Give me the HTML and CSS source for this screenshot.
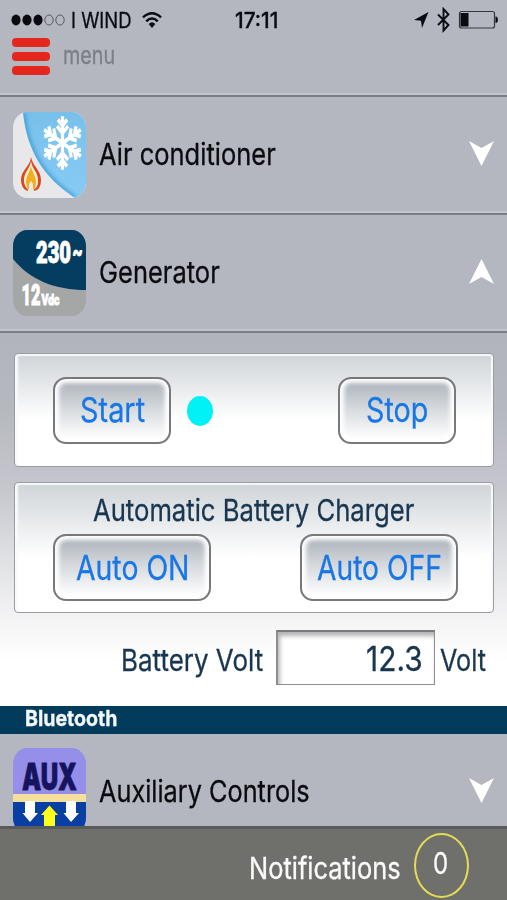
FILE: index.html
```html
<!DOCTYPE html>
<html lang="en">
<head>
<meta charset="utf-8">
<title>Controls</title>
<link rel="stylesheet" href="styles.css">
</head>
<body>
<div class="app">
  <header class="header">
    <div class="status">
      <svg class="signal" width="54" height="20" viewBox="0 0 54 20">
        <g fill="#090b10"><ellipse cx="5" cy="10" rx="4.6" ry="5.4"/><ellipse cx="16" cy="10" rx="4.6" ry="5.4"/><ellipse cx="27" cy="10" rx="4.6" ry="5.4"/></g>
        <g fill="none" stroke="#555960"><ellipse cx="38" cy="10" rx="4.2" ry="5"/><ellipse cx="49" cy="10" rx="4.2" ry="5"/></g>
      </svg>
      <span class="carrier"><span class="t">I WIND</span></span>
      <svg class="wifi" width="20" height="18" viewBox="0 0 20 18">
        <g fill="none" stroke="#090b10" stroke-width="2.4"><path d="M1 6.300Q10-2 19 6.300"/><path d="M4.200 10.300Q10 4.600 15.800 10.300"/></g>
        <path d="M6.700 13Q10 9.700 13.300 13L10 17z" fill="#090b10"/>
      </svg>
      <span class="clock"><span class="t">17:11</span></span>
      <svg class="tray" width="86" height="26" viewBox="0 0 86 26">
        <path d="M1 13 15.500 5 9 21 8 13.700z" fill="#090b10"/>
        <path d="M25 7.500 35.500 18 30.500 23.500V2L35.500 7.500 25 18" fill="none" stroke="#090b10" stroke-width="1.900"/>
        <rect x="46.500" y="4.500" width="35" height="16.500" rx="2" fill="none" stroke="#33363c" stroke-width="1.200"/>
        <rect x="47.500" y="6" width="8" height="13.500" fill="#090b10"/>
        <path d="M82.500 9.500h.8q1.700 1 1.700 3.300t-1.700 3.300h-.8z" fill="#090b10"/>
      </svg>
    </div>
    <div class="menu">
      <div class="burger"><i></i><i></i><i></i></div>
      <span class="menu-label"><span class="t">menu</span></span>
    </div>
  </header>

  <section class="row">
    <svg class="icon" width="73" height="86" viewBox="0 0 73 86">
      <defs>
        <clipPath id="tile"><rect width="73" height="86" rx="14" ry="16"/></clipPath>
        <linearGradient id="sky" x1="0" y1="0" x2="0" y2="1"><stop offset="0" stop-color="#78c0ea"/><stop offset="1" stop-color="#87cbf5"/></linearGradient>
        <filter id="soft"><feGaussianBlur stdDeviation="2"/></filter>
        <clipPath id="blue"><path d="M10 0C14 38 29 64 62 86H73V0z"/></clipPath>
      </defs>
      <g clip-path="url(#tile)">
        <rect width="73" height="86" fill="#e8e8ea"/>
        <path d="M10 0C14 38 29 64 62 86H73V0z" fill="url(#sky)"/>
        <g clip-path="url(#blue)"><path d="M10 0C14 38 29 64 62 86" fill="none" stroke="#3a9bd4" stroke-width="4" filter="url(#soft)"/></g>
        <g stroke="#fff" stroke-width="3.500" fill="none" transform="translate(49.500 31) scale(.92 1.160)">
          <g id="arm"><path d="M0 0V-23M-5-20 0-15 5-20M-6-14.500 0-8.500 6-14.500"/></g>
          <use href="#arm" transform="rotate(60)"/><use href="#arm" transform="rotate(120)"/><use href="#arm" transform="rotate(180)"/><use href="#arm" transform="rotate(240)"/><use href="#arm" transform="rotate(300)"/>
        </g>
        <path d="M18 45C17 55 8 58 8 68 8 74 11 78 15 79L14 72 18 66 22 72 21 79C26 78 28 74 28 68 28 58 20 55 18 45z" fill="#d94a24"/>
        <path d="M18 49C17 57 11 60 11 68 11 73 13 76 15 77L15 71 18 66 21 71 21 77C24 76 25 73 25 68 25 60 19 57 18 49z" fill="#fff1d0"/>
        <path d="M18 54C17 60 13 64 13 70 13 74 15 77 16 78V72L18 69 20 72V78C22 77 23 74 23 70 23 64 19 60 18 54z" fill="#f3ad22"/>
      </g>
    </svg>
    <span class="label l-air"><span class="t">Air conditioner</span></span>
    <svg class="arrow" width="25" height="25" viewBox="0 0 25 25"><path d="M0 0 12.500 7 25 0 12.500 25z" fill="#fff"/></svg>
  </section>

  <section class="row">
    <svg class="icon" width="73" height="86" viewBox="0 0 73 86">
      <g clip-path="url(#tile)">
        <rect width="73" height="86" fill="#a5a6a6"/>
        <path d="M0 0H73V60C42 60 17 50 0 29z" fill="#043d60"/>
      </g>
      <g class="plate">
        <text x="23" y="33" font-size="31" textLength="35" lengthAdjust="spacingAndGlyphs">230</text>
        <text x="59.500" y="31" font-size="25" textLength="10" lengthAdjust="spacingAndGlyphs">~</text>
        <text x="8.500" y="75" font-size="30" textLength="19" lengthAdjust="spacingAndGlyphs">12</text>
        <text x="28.500" y="75" font-size="15.500" textLength="18" lengthAdjust="spacingAndGlyphs">Vdc</text>
      </g>
    </svg>
    <span class="label l-gen"><span class="t">Generator</span></span>
    <svg class="arrow" width="25" height="25" viewBox="0 0 25 25"><path d="M0 25 12.500 18 25 25 12.500 0z" fill="#fff"/></svg>
  </section>

  <main class="content">
    <div class="panel power">
      <button class="btn start"><span class="t">Start</span></button>
      <span class="led"></span>
      <button class="btn stop"><span class="t">Stop</span></button>
    </div>
    <div class="panel charger">
      <h2 class="title"><span class="t">Automatic Battery Charger</span></h2>
      <div class="pair">
        <button class="btn on"><span class="t">Auto ON</span></button>
        <button class="btn off"><span class="t">Auto OFF</span></button>
      </div>
    </div>
    <div class="reading">
      <span class="name"><span class="t">Battery Volt</span></span>
      <span class="field"><span class="t">12.3</span></span>
      <span class="unit"><span class="t">Volt</span></span>
    </div>
  </main>

  <div class="section-bar"><span class="t">Bluetooth</span></div>

  <section class="row last">
    <svg class="icon" width="73" height="86" viewBox="0 0 73 86">
      <g clip-path="url(#tile)">
        <rect width="73" height="86" fill="#958fea"/>
        <rect y="46" width="73" height="8" fill="#f4df9c"/>
        <rect y="54" width="73" height="32" fill="#093ea3"/>
        <path d="M12 53H22V65H25L17 74 9.500 65H12zM53 53H63V65H66L58 74 50.500 65H53z" fill="#fff"/>
        <path d="M31 86V67H28L36.500 57.500 45 67H42V86z" fill="#ffff1c"/>
      </g>
      <text class="aux" x="9" y="41.500" font-size="37" textLength="55" lengthAdjust="spacingAndGlyphs">AUX</text>
    </svg>
    <span class="label l-aux"><span class="t">Auxiliary Controls</span></span>
    <svg class="arrow" width="25" height="25" viewBox="0 0 25 25"><path d="M0 0 12.500 7 25 0 12.500 25z" fill="#fff"/></svg>
  </section>

  <footer class="footer">
    <span class="note"><span class="t">Notifications</span></span>
    <span class="count"><span class="t">0</span></span>
  </footer>
</div>
</body>
</html>
```
FILE: styles.css
```css
* { box-sizing: border-box; }
body { margin: 0; font-family: Inter, "Liberation Sans", sans-serif; }
.app { width: 507px; height: 900px; overflow: hidden; display: flex; flex-direction: column; background: #b4b7c0; }
.t { display: inline-block; white-space: nowrap; transform: scaleX(var(--sx, .83)); transform-origin: left center; -webkit-text-stroke: .3px currentColor; }
svg { display: block; flex: none; }

.header { height: 97px; flex: none; border-bottom: 2px solid #7b7e84; box-shadow: inset 0 -2px #c1c4ca; }
.status { display: flex; align-items: center; height: 38px; padding: 2px 8px 0 11px; color: #090b10; font-size: 21px; }
.carrier { width: 60px; margin-left: 6px; --sx: .88; }
.wifi { margin-left: 11px; }
.clock { width: 45px; margin-left: 73px; font-weight: 500; --sx: .99; }
.tray { margin-left: auto; }
.menu { display: flex; padding-left: 12px; }
.burger { display: flex; flex-direction: column; gap: 5px; width: 38px; }
.burger i { height: 9px; border-radius: 4px; background: #e5261d; }
.menu-label { margin: 0 0 0 13px; color: #7c7f86; font-size: 25px; line-height: 34px; --sx: .79; }

.row { display: flex; align-items: center; height: 118px; flex: none; padding: 0 13px; border-bottom: 2px solid #7b7e84; box-shadow: inset 0 -2px #c1c4ca; background: #b4b7c0; }
.label { margin: -3px 0 0 13px; font-size: 30px; line-height: 36px; color: #0a0b0f; width: 210px; }
.l-air { --sx: .85; }
.l-gen { --sx: .85; }
.l-aux { --sx: .843; }
.arrow { margin: -4px 0 0 auto; }
.row.last { height: 92px; align-items: flex-start; padding-top: 14px; border: 0; box-shadow: none; overflow: hidden; }
.row.last .label { margin-top: 25px; }
.row.last .arrow { margin-top: 30px; }
.plate { font-family: Roboto, sans-serif; font-weight: 900; fill: #fff; stroke: #fff; stroke-width: 1px; }
.aux { font-family: Inter, sans-serif; font-weight: 900; fill: #17145f; stroke: #17145f; stroke-width: .8px; stroke-linejoin: round; }

.content { height: 373px; flex: none; padding: 20px 13px 0 14px; background: linear-gradient(#b1b4bd 0, #b6b8c0 20%, #c6c7ce 42%, #dfe0e3 60%, #f5f5f6 78%, #fff 88%); }
.panel { border: 1px solid #999da3; border-radius: 4px; background: linear-gradient(#cfd4d8, #fff 58%); box-shadow: inset 0 2px 1px #f6f7f8, inset 3px 0 2px #fafafa, inset -2px 0 1px #fafafa; }
.power { height: 114px; display: flex; align-items: center; padding: 0 37px 0 38px; }
.btn { height: 67px; border: 2px solid #77797d; border-radius: 13px; padding: 0; background: linear-gradient(#a9b0b8, #d4d8dc 45%, #fbfbfc 90%); box-shadow: inset 0 0 4px 4px #fff; font: 34px/36px Inter, sans-serif; color: #1877e4; text-align: left; }
.start { width: 118px; padding-left: 25px; --sx: .85; }
.stop { width: 118px; padding-left: 26px; margin-left: auto; --sx: .845; }
.led { width: 26px; height: 30px; margin: 2px 0 0 16px; border-radius: 50%; background: #00f2f7; }
.charger { height: 131px; margin-top: 15px; }
.title { margin: 10px 0 0 78px; font-weight: 400; font-size: 30px; line-height: 34px; color: #183650; --sx: .855; }
.pair { display: flex; justify-content: space-between; margin-top: 7px; padding: 0 35px 0 38px; }
.on { width: 158px; padding-left: 21px; --sx: .835; }
.off { width: 158px; padding-left: 15px; --sx: .83; }
.reading { display: flex; align-items: center; margin-top: 17px; color: #183650; font-size: 30px; line-height: 36px; }
.name { width: 154px; margin: 4px 0 0 107px; --sx: .865; }
.field { width: 159px; height: 55px; margin-left: 1px; padding: 9px 0 0 88px; border: 1px solid #8b8d90; border-top: 2px solid #77797c; border-left-width: 2px; background: #fff; box-shadow: inset 2px 4px 4px #b4b4b6; font-size: 34px; --sx: .88; }
.unit { margin: 4px 0 0 5px; width: 50px; --sx: .84; }

.section-bar { height: 28px; flex: none; padding-left: 25px; background: #033b5c; color: #f3f8fc; font-size: 22px; font-weight: 700; line-height: 25px; --sx: .89; }
.footer { height: 74px; flex: none; display: flex; border-top: 3px solid #595a5b; background: #6f706b; color: #fafafa; font-size: 30px; line-height: 36px; }
.note { width: 165px; margin: 21px 0 0 249px; --sx: .848; }
.count { width: 55px; height: 65px; margin-top: 4px; padding: 10px 0 0 17px; border: 2px solid #e5dc55; border-radius: 50%; --sx: .8; }
```
